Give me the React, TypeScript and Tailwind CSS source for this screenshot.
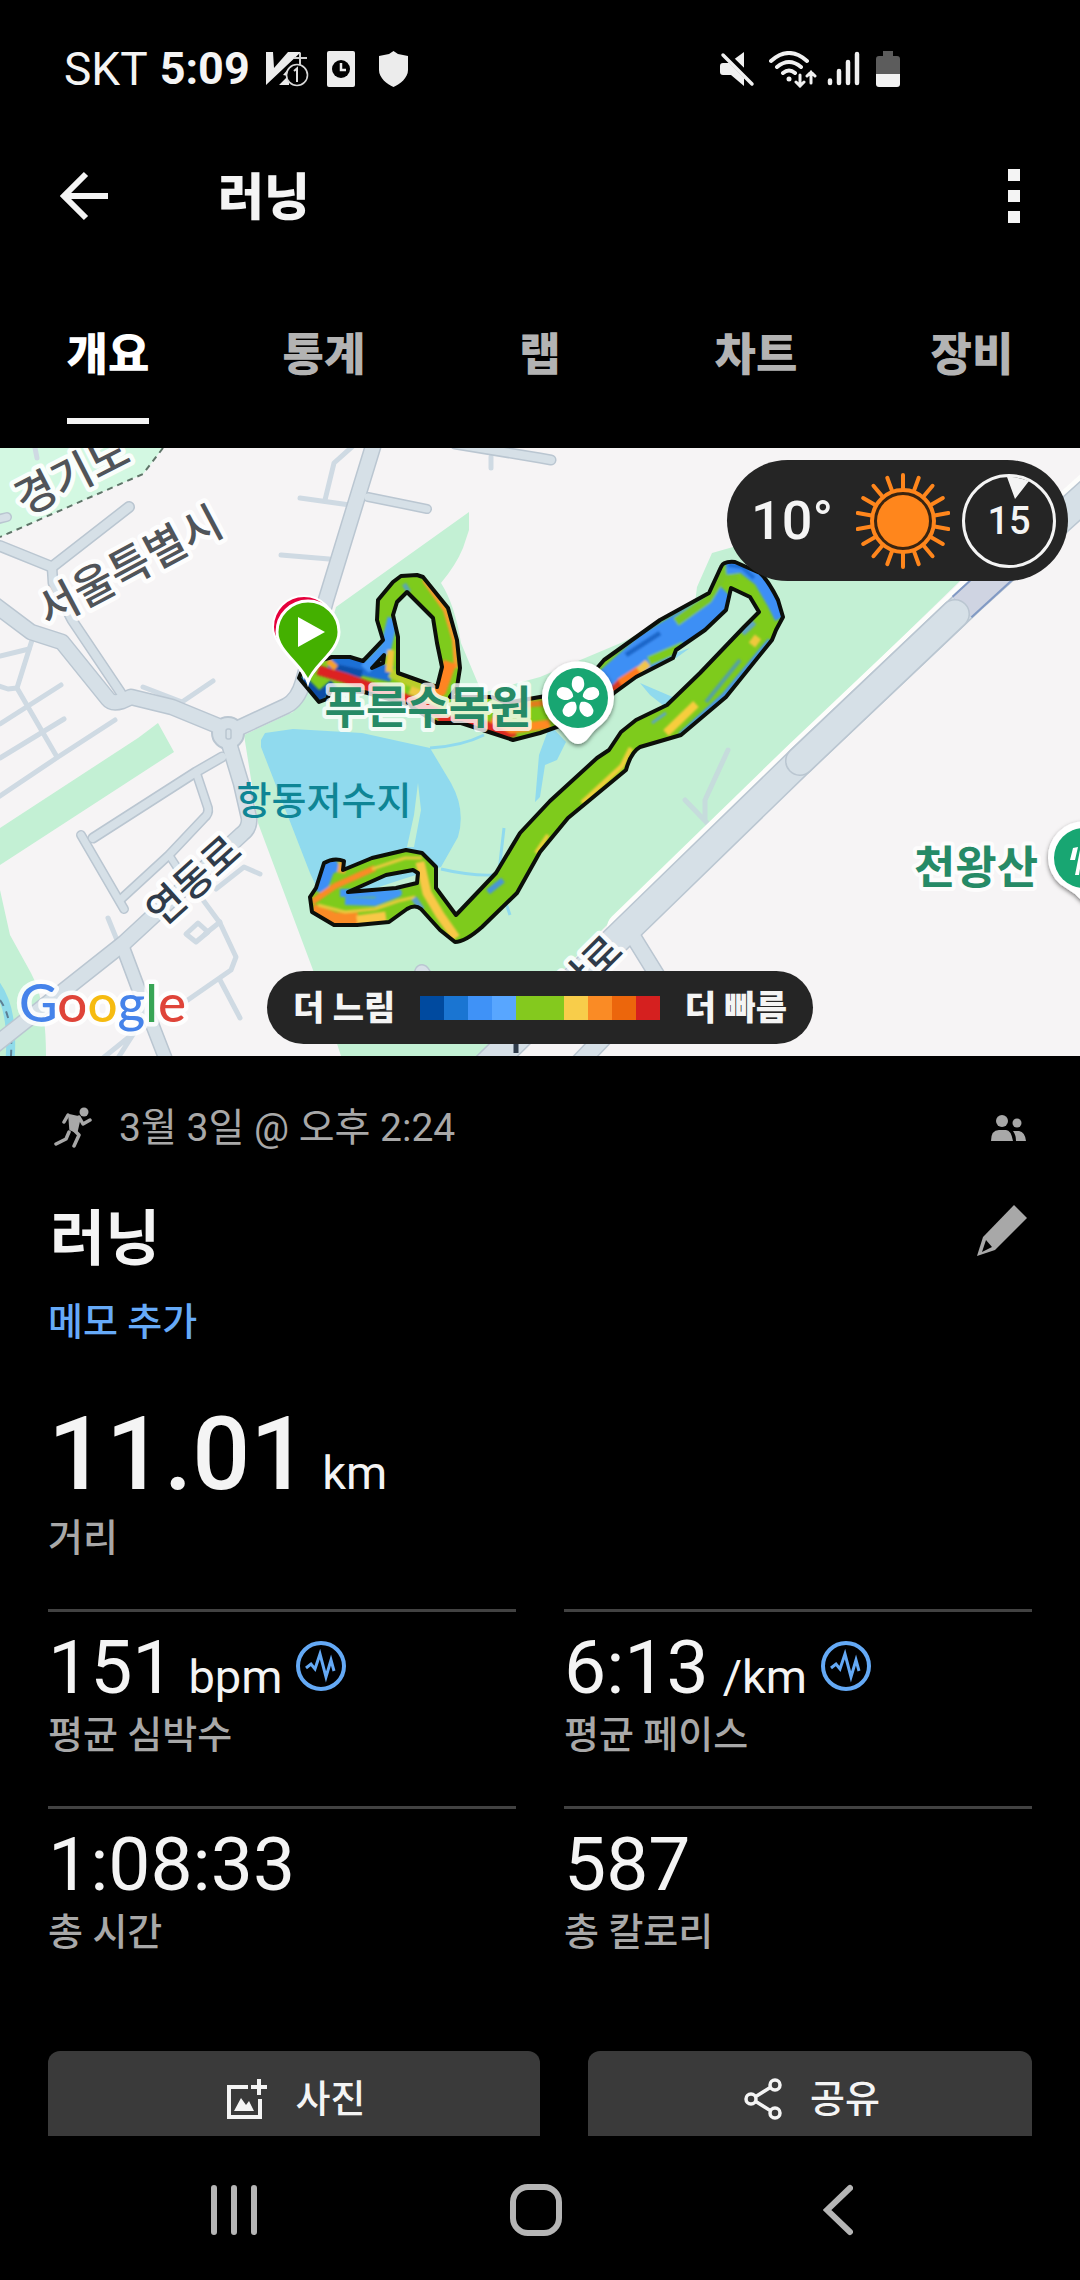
import { useState } from "react";

const TABS = ["개요", "통계", "랩", "차트", "장비"];

const PACE_COLORS = [
  "bg-[#004a9f]",
  "bg-[#1a75d2]",
  "bg-[#3f92f7]",
  "bg-[#58a6ff]",
  "bg-[#84c91e]",
  "bg-[#84c91e]",
  "bg-[#f8cd4a]",
  "bg-[#fa8b25]",
  "bg-[#ec660c]",
  "bg-[#d5201f]",
];

const STATS = [
  { value: "151", unit: "bpm", label: "평균 심박수", graph: true },
  { value: "6:13", unit: "/km", label: "평균 페이스", graph: true },
  { value: "1:08:33", unit: "", label: "총 시간", graph: false },
  { value: "587", unit: "", label: "총 칼로리", graph: false },
];

// wide streets, drawn with a darker edge
const ROADS = [
  { d: "M0 546 L52 567 L129 507", w: 10 },
  { d: "M-5 520 L7 517", w: 8 },
  { d: "M52 567 L53 583 L72 620 L121 693", w: 9 },
  { d: "M-5 605 L31 632 L62 642 L108 699 Q112 704 122 701 L131 697 L172 707 L228 730", w: 15 },
  { d: "M375 440 L326 600 L303 682 Q298 700 286 706 L228 733", w: 15 },
  { d: "M352 505 L326 590", w: 6 },
  { d: "M368 497 L427 509", w: 8 },
  { d: "M455 444 L540 458 L551 460", w: 9 },
  { d: "M228 740 L241 783 L249 818 Q250 828 242 834 L124 943 L-5 1045", w: 15 },
  { d: "M222 757 L196 772 L93 838", w: 9 },
  { d: "M196 772 L208 808 Q209 814 204 818 L169 855 L120 900", w: 8 },
  { d: "M81 835 L124 909", w: 8 },
  { d: "M169 855 L182 875", w: 7 },
  { d: "M122 945 L140 993 L166 1060", w: 13 },
  { d: "M422 972 L440 1000", w: 14 },
  { d: "M634 938 L660 980", w: 15 },
  { d: "M625 1015 L580 1062", w: 17 },
  { d: "M1100 483 L970 600 L801 760 L623 933 L485 1068", w: 28 },
];

// alleys and foot paths
const PATHS = [
  "M300 498 L350 505",
  "M325 500 L334 463 L353 446",
  "M281 555 L329 559",
  "M491 457 L491 468",
  "M143 687 L182 702 L213 681",
  "M0 656 L29 649",
  "M33 637 L17 688 L57 757",
  "M-4 685 L8 689 L17 688",
  "M0 724 L61 685",
  "M0 758 L64 719",
  "M0 796 L58 757 L115 720",
  "M108 918 L119 945",
  "M216 889 L244 867 L260 874",
  "M203 900 L220 923 L236 957 L231 970 L182 1004",
  "M186 934 L198 923 L208 932 L196 942 Z",
  "M205 934 L220 922",
  "M220 980 L240 1018",
  "M103 1058 L134 1033 L118 1058",
  "M35 448 L37 458",
];

const TRACK_OUTER =
  "M299 678 L301 673 L315 662 L332 657 L350 657 L363 661 L383 640 L377 620 L378 600 L393 582 L401 576 L417 575 L423 577 L448 608 L457 640 L460 668 L457 687 L450 697 L492 697 L506 703 L540 697 L580 690 L598 667 L604 660 L660 620 L709 593 L721 567 Q723 561 735 562 L760 573 Q768 580 778 600 L783 617 L776 630 L772 640 L726 697 L681 735 L640 747 Q631 752 626 770 L568 818 L540 852 L517 893 L482 927 Q465 942 455 942 L440 930 L421 909 Q415 904 407 909 L389 922 L357 925 L334 925 L312 912 L310 897 L316 888 L324 863 Q334 857 344 861 L343 870 L372 858 L406 850 L422 853 L436 867 L436 888 L456 915 L496 873 L520 833 L550 801 L597 758 L609 750 L621 732 L636 720 L667 705 L700 673 L744 627 L759 612 L750 597 L731 588 L726 610 L705 630 L676 650 L673 658 L636 677 L614 693 L590 715 L540 733 L513 740 L492 733 L461 723 L437 723 L407 704 L364 692 L331 690 L327 699 L319 702 Z";

const TRACK_HOLES =
  "M407 592 L433 618 L437 643 L442 667 L437 687 L398 673 L398 637 L393 615 L397 602 Z M348 892 L386 875 L413 870 L418 873 L417 883 L396 888 Z M372 668 L384 655 L383 663 Z";

// pace colours along the track: [path, colour, width]
const PACE: [string, string, number][] = [
  ["M328 664 L350 665 L392 674", "#1f6fd6", 16],
  ["M335 668 L362 674", "#0f4fa8", 8],
  ["M365 669 L386 647 L393 618", "#4297f5", 11],
  ["M300 678 L319 697 L334 684", "#0b4ea6", 10],
  ["M318 670 L345 678 L378 690 L412 701 L440 714", "#dd2421", 10],
  ["M328 661 L336 668", "#f8a028", 6],
  ["M390 673 L410 682 L432 692", "#b9ce2c", 9],
  ["M391 650 L389 672", "#f1c43c", 7],
  ["M404 584 L409 592", "#5ba7b0", 5],
  ["M424 580 L445 610 L454 640 L456 668", "#ff9a2e", 4],
  ["M450 662 L440 690 L425 692", "#ff8420", 13],
  ["M410 690 L436 700", "#eec93f", 8],
  ["M438 722 L470 722 L505 733 L515 730", "#dd2b20", 12],
  ["M492 718 L512 729 L550 724", "#ff8a20", 9],
  ["M506 706 L545 703", "#e07b1c", 6],
  ["M585 708 L612 684 L650 650 L705 617 L728 594", "#3c8ff5", 36],
  ["M626 655 L660 633", "#1a66c9", 5],
  ["M676 622 L708 599 L724 573 L738 577", "#79c627", 9],
  ["M610 694 L622 682", "#d93a1c", 9],
  ["M620 683 L640 670", "#ff7a1c", 9],
  ["M639 671 L648 663", "#f3c44a", 8],
  ["M649 661 L684 646", "#7ecb1c", 9],
  ["M650 678 L674 660", "#4a9af2", 6],
  ["M726 568 L742 566 L760 580 L774 604 L781 618", "#3c8ff5", 13],
  ["M728 565 L742 567 L754 578", "#1f6fd6", 4],
  ["M742 633 L754 622", "#5fa6c0", 7],
  ["M752 645 L758 637", "#efc93c", 8],
  ["M770 640 L724 695 L680 735", "#4a96e6", 5],
  ["M740 660 L706 702", "#56a2a2", 4],
  ["M666 733 L696 704", "#f7cd3e", 8],
  ["M631 748 L622 766 L582 803", "#efd03a", 5],
  ["M548 835 L536 853", "#efd03a", 4],
  ["M652 723 L666 713", "#5fa6c0", 3],
  ["M488 892 L503 880", "#4a96d6", 6],
  ["M319 892 L328 868 L338 864", "#3c8ff5", 14],
  ["M343 862 L341 873", "#f5a638", 8],
  ["M312 902 L335 886 L375 868", "#fa8b25", 6],
  ["M372 869 L405 858 L422 858", "#e8ca3c", 3],
  ["M420 862 L427 893 L440 915 L456 938", "#f9c846", 9],
  ["M312 910 L335 919 L358 919", "#fa8b25", 13],
  ["M357 921 L386 917", "#f9c846", 11],
  ["M318 905 L345 912 L375 909 L398 901 L415 897", "#e8ca3c", 3],
  ["M340 893 L398 893 L375 902 L345 901", "#4297f5", 8],
  ["M414 898 L422 910", "#5b9fd0", 6],
];

const START_PIN = "M308 682 C303 665 277 652 277 632 A31 31 0 0 1 339 632 C339 652 313 665 308 682 Z";

const SunIcon = () => (
  <svg width="94" height="98" viewBox="-47 -49 94 98" fill="none" stroke="#ff861c">
    {Array.from({ length: 18 }, (_, i) => (
      <path key={i} d="M0 -32 V-46" strokeWidth="4" strokeLinecap="round" transform={`rotate(${i * 20})`} />
    ))}
    <circle r="31" strokeWidth="4" fill="#3a2410" />
    <circle r="26" fill="#ff861c" stroke="none" />
  </svg>
);

const GraphIcon = () => (
  <svg className="self-start mt-[11px]" width="50" height="50" viewBox="0 0 50 50" fill="none" stroke="#64a9f5">
    <circle cx="25" cy="25" r="23" strokeWidth="4" />
    <path d="M10 27 L15 23 L19 28 L24 13 L30 36 L35 19 L38 30" strokeWidth="3" />
  </svg>
);

const StatusBar = () => (
  <div className="flex items-center justify-between h-[94px] pt-11 pl-16 pr-45">
    <div className="flex items-center">
      <span className="text-[46px] leading-[50px]">SKT</span>
      <span className="ml-3 text-[45px] leading-[50px] font-bold">5:09</span>
      <svg className="ml-4" width="43" height="37" viewBox="0 0 43 37" fill="#ececec">
        <path d="M0 1 H7 L8 17 L22 1 H35 L0 34 Z" />
        <path d="M13 34 L22 25 L17 24 L23 17 V34 Z" />
        <path d="M34 2 V14 M28 7 H41" stroke="#d0d0d0" strokeWidth="2" />
        <circle cx="31" cy="24" r="10.5" fill="#000" stroke="#d8d8d8" strokeWidth="1.6" />
        <path d="M28 20 L31 17.500 V31" fill="none" stroke="#e0e0e0" strokeWidth="2" />
      </svg>
      <svg className="ml-[18px]" width="28" height="36" viewBox="0 0 28 36">
        <rect width="28" height="36" rx="2" fill="#ececec" />
        <circle cx="14" cy="18" r="9" fill="#000" />
        <path d="M14 12 V19 H19" fill="none" stroke="#ececec" strokeWidth="2.500" />
      </svg>
      <svg className="ml-6" width="29" height="36" viewBox="0 0 29 36" fill="#ececec">
        <path d="M14.500 0 L19 3 L29 5 V19 C29 27 21 33 14.500 36 C8 33 0 27 0 19 V5 L10 3 Z" />
      </svg>
    </div>
    <div className="flex items-center">
      <svg width="35" height="36" viewBox="0 0 35 36" fill="#f0f0f0">
        <path d="M24 1 V17 L14.500 8 Z" />
        <path d="M3 12 H9 L24 27 V35 L11 24 H3 Q0 24 0 21 V15 Q0 12 3 12 Z" />
        <path d="M6 1 L34 29" stroke="#000" strokeWidth="3" />
        <path d="M3 4 L32 33" stroke="#f0f0f0" strokeWidth="3.500" strokeLinecap="round" />
      </svg>
      <svg className="ml-[14px]" width="48" height="37" viewBox="0 0 48 37" fill="none" stroke="#f0f0f0" strokeWidth="4" strokeLinecap="round">
        <path d="M2 10 Q20 -6 38 10 M8 16 Q20 6 32 16 M14 22 Q20 17 26 22" />
        <circle cx="20" cy="28" r="2.500" fill="#f0f0f0" stroke="none" />
        <path d="M31 24 V35 M27 31 L31 35 L35 31 M42 32 V21 M38 25 L42 21 L46 25" strokeWidth="3" />
      </svg>
      <svg className="ml-[10px]" width="33" height="36" viewBox="0 0 33 36" stroke="#f0f0f0" strokeWidth="4.500" strokeLinecap="round">
        <path d="M3 29.500 V32 M12 20 V32 M21 11 V32 M30 3 V32" />
      </svg>
      <svg className="ml-4" width="24" height="36" viewBox="0 0 24 36">
        <path d="M7 0 H17 V5 H21 Q24 5 24 8 V23 H0 V8 Q0 5 3 5 H7 Z" fill="#5c5c5c" />
        <path d="M0 23 H24 V33 Q24 36 21 36 H3 Q0 36 0 33 Z" fill="#f2f2f2" />
      </svg>
    </div>
  </div>
);

const RouteMap = () => (
  <svg className="block w-full h-auto" viewBox="0 448 1080 608" role="img" aria-label="지도">
    <defs>
      <clipPath id="track">
        <path clipRule="evenodd" d={TRACK_OUTER + TRACK_HOLES} />
      </clipPath>
      <filter id="soft">
        <feGaussianBlur stdDeviation="1" />
      </filter>
      <filter id="shadow" x="-30%" y="-30%" width="160%" height="160%">
        <feDropShadow dx="0" dy="2" stdDeviation="2" floodOpacity="0.5" />
      </filter>
    </defs>
    <rect y="448" width="1080" height="608" fill="#f6f4f5" />

    {/* parks */}
    <path d="M0 448 H163 L143 474 L0 537 Z" fill="#d3f8e2" />
    <path d="M163 448 L143 474 L0 537" fill="none" stroke="#5f7468" strokeWidth="2" strokeDasharray="6 5" />
    <path
      d="M469 512 L336 607 L318 670 L293 712 L244 735 L258 823 L313 970 L341 1056 H480 L604 928 L781 755 L961 580 V545 H760 L733 547 L712 553 L697 587 L695 603 L623 642 L540 677 L482 693 L461 643 Q455 605 441 583 Q456 565 463 548 L469 530 Z"
      fill="#c3f0d4"
    />
    <path d="M0 828 L138 738 L158 723 L174 752 L0 865 Z" fill="#c3f0d4" />
    <path d="M0 890 L10 935 L31 973 Q46 1000 46 1056 H0 Z" fill="#c3f0d4" />

    {/* water */}
    <path
      d="M261 740 L265 733 L293 729 L362 733 L430 748 L451 783 Q466 810 458 837 L441 867 L400 880 L325 905 L310 873 L261 747 Z"
      fill="#90daee"
    />
    <path d="M418 783 L421 810 L414 847 L407 847 L414 815 Z" fill="#c3f0d4" />
    <path d="M430 748 Q462 746 484 735 M441 869 Q470 876 494 875 M504 828 L498 880 L510 915" fill="none" stroke="#90daee" strokeWidth="3" />
    <path d="M550 725 L566 742 L557 760 L545 765 L540 797 L535 802 L539 755 Z" fill="#90daee" />
    <path d="M640 683 L675 698 L664 706 L650 695 Z M660 658 L690 648 L676 658 Z" fill="#90daee" />
    <path d="M-4 985 Q14 1010 10 1060" fill="none" stroke="#8fdbea" strokeWidth="9" />
    <path d="M0 1000 Q13 1018 11 1056" fill="none" stroke="#5d7f92" strokeWidth="2" strokeDasharray="7 6" />

    {/* streets */}
    <g fill="none" strokeLinejoin="round" strokeLinecap="round">
      {PATHS.map((d) => (
        <path key={d} d={d} stroke="#cfdae3" strokeWidth="5" />
      ))}
      <path d="M728 750 L705 800 L705 820 M685 800 L712 828" stroke="#c6dcdc" strokeWidth="5" />
      <path d="M1100 478 L970 595 L801 755 L623 928" stroke="#fdfdfb" strokeWidth="32" />
      {ROADS.map((r) => (
        <path key={r.d} d={r.d} stroke="#bac6d1" strokeWidth={r.w + 2} />
      ))}
      <circle cx="228" cy="733" r="16" fill="#d6e0e7" stroke="#bac6d1" strokeWidth="2" />
      {ROADS.map((r) => (
        <path key={r.d} d={r.d} stroke="#d6e0e7" strokeWidth={r.w - 1} />
      ))}
      <rect x="226" y="729" width="5" height="10" rx="2" stroke="#bac6d1" strokeWidth="1.500" />
      <path d="M1010 563 L962 607" stroke="#8199c4" strokeWidth="30" strokeLinecap="butt" />
      <path d="M1010 563 L962 607" stroke="#cfd4e2" strokeWidth="26" strokeLinecap="butt" />
      <path d="M955 614 L800 761" stroke="#bac6d1" strokeWidth="30" />
      <path d="M955 614 L800 761" stroke="#d6e0e7" strokeWidth="27" />
    </g>
    <path d="M516 1044 V1053" stroke="#2f3b4a" strokeWidth="5" />

    {/* place names under the track */}
    <g
      fontFamily='Roboto, "Noto Sans CJK KR", sans-serif'
      fontWeight="500"
      textAnchor="middle"
      stroke="#fff"
      strokeOpacity="0.9"
      strokeLinejoin="round"
      paintOrder="stroke"
    >
      <text fontSize="44" fill="#505459" strokeWidth="9" transform="translate(79 489) rotate(-27)">경기도</text>
      <text fontSize="44" fill="#505459" strokeWidth="9" transform="translate(137 580) rotate(-28)">서울특별시</text>
      <text fontSize="40" fill="#2f3b4a" strokeWidth="9" transform="translate(203 891) rotate(-42)">연동로</text>
      <text fontSize="40" fill="#2f3b4a" strokeWidth="9" transform="translate(599 979) rotate(-45)">산로</text>
      <text fontSize="38" x="324" y="814" fill="#0e8595" stroke="none">항동저수지</text>
    </g>

    {/* track */}
    <path d={TRACK_OUTER + TRACK_HOLES} fillRule="evenodd" fill="#7ecb1c" />
    <g clipPath="url(#track)">
      <g filter="url(#soft)" fill="none" strokeLinejoin="round">
        {PACE.map(([d, color, w]) => (
          <path key={d} d={d} stroke={color} strokeWidth={w} />
        ))}
      </g>
    </g>
    <path d={TRACK_OUTER + TRACK_HOLES} fill="none" stroke="#0c0f0a" strokeWidth="4" strokeLinejoin="round" />

    <g
      fontFamily='Roboto, "Noto Sans CJK KR", sans-serif'
      fontWeight="700"
      fontSize="45"
      textAnchor="middle"
      fill="#268a66"
      stroke="#fff"
      strokeOpacity="0.8"
      strokeWidth="8"
      strokeLinejoin="round"
      paintOrder="stroke"
    >
      <text x="428" y="724">푸른수목원</text>
      <text x="976" y="884">천왕산</text>
    </g>

    {/* finish and start pins */}
    <path d={START_PIN} transform="translate(-4 -5)" fill="#e5003c" stroke="#fff" strokeWidth="2" />
    <path d={START_PIN} fill="#44b000" stroke="#fff" strokeWidth="3" />
    <path d="M298 617 V647 L325 632 Z" fill="#fff" />

    {/* botanical garden */}
    <g filter="url(#shadow)">
      <path d="M578 744 Q572 744 566 736 Q562 730 554 724 A36 36 0 1 1 602 724 Q594 730 590 736 Q584 744 578 744 Z" fill="#fff" />
      <path d="M1090 904 Q1084 904 1075 894 L1060 884 A36 36 0 1 1 1108 884 Z" fill="#fff" />
    </g>
    <circle cx="578" cy="698" r="30" fill="#18a672" />
    <g transform="translate(578 698)" fill="#fff">
      {[0, 72, 144, 216, 288].map((a) => (
        <path key={a} d="M0 -5 C-5 -7 -7 -12 -6 -16 A6 6 0 0 1 6 -16 C7 -12 5 -7 0 -5 Z" transform={`rotate(${a})`} />
      ))}
    </g>
    <circle cx="1084" cy="858" r="30" fill="#18a672" />
    <path d="M1073 848 L1078 847 L1075 860 H1070 Z M1080 850 H1083 L1079 875 H1075 Z" fill="#fff" />

    {/* map provider */}
    <text
      x="19"
      y="1022"
      fontFamily="Lato, sans-serif"
      fontSize="53"
      stroke="#fff"
      strokeOpacity="0.85"
      strokeWidth="9"
      strokeLinejoin="round"
      paintOrder="stroke"
      fontWeight="500"
    >
      <tspan fill="#4583ea">G</tspan>
      <tspan fill="#df4439">o</tspan>
      <tspan fill="#f6bb10">o</tspan>
      <tspan fill="#4583ea">g</tspan>
      <tspan fill="#38a555">l</tspan>
      <tspan fill="#df4439">e</tspan>
    </text>
  </svg>
);

const App = () => {
  const [activeTab, setActiveTab] = useState(0);

  return (
    <div className="flex flex-col min-h-screen bg-black text-[#f4f4f4] font-[Roboto,'Noto_Sans_CJK_KR',sans-serif]">
      <StatusBar />

      <header className="flex items-center h-[204px] pl-[60px] pr-[60px]">
        <button aria-label="뒤로">
          <svg width="48" height="50" viewBox="0 0 48 50" fill="none" stroke="#f4f4f4" strokeWidth="6">
            <path d="M26 3 L4 25 L26 47 M4 25 H48" />
          </svg>
        </button>
        <h1 className="ml-[110px] pt-1 text-[50px] leading-[60px] font-black">러닝</h1>
        <button aria-label="메뉴" className="ml-auto flex flex-col gap-[9px]">
          <span className="size-3 bg-[#f4f4f4]" />
          <span className="size-3 bg-[#f4f4f4]" />
          <span className="size-3 bg-[#f4f4f4]" />
        </button>
      </header>

      <nav className="grid grid-cols-5 pt-[30px] pb-6">
        {TABS.map((tab, index) => (
          <button
            key={tab}
            onClick={() => setActiveTab(index)}
            className={`flex flex-col items-center text-[45px] leading-[56px] font-black ${
              activeTab === index ? "text-white" : "text-[#b3b3b3]"
            }`}
          >
            <span>
              {tab}
              <span className={`block mt-[34px] h-[6px] ${activeTab === index ? "bg-[#f4f4f4]" : ""}`} />
            </span>
          </button>
        ))}
      </nav>

      <section className="relative">
        <RouteMap />
        {/* weather */}
        <div className="absolute top-3 right-3 flex items-center h-[121px] w-[341px] pl-6 pr-3 rounded-full bg-[#252525]">
          <span className="text-[54px] leading-[64px] font-medium">10°</span>
          <div className="ml-auto flex items-center gap-3">
            <SunIcon />
            <div className="relative flex items-center justify-center size-[94px] rounded-full border-[3px] border-[#f4f4f4]">
              <svg className="absolute top-0 left-[38px]" width="26" height="22" viewBox="0 0 26 22">
                <path d="M1 0 Q13 -1 26 4 L12 22 L4 0 Z" fill="#f4f4f4" />
              </svg>
              <span className="text-[38px] leading-[44px] font-medium">15</span>
            </div>
          </div>
        </div>
        {/* pace legend */}
        <div className="absolute bottom-3 left-1/2 -translate-x-1/2 flex items-center justify-between w-[546px] h-[73px] px-[26px] rounded-full bg-[#252525] text-[34px] leading-[44px] font-black whitespace-nowrap">
          <span>더 느림</span>
          <div className="flex">
            {PACE_COLORS.map((color, index) => (
              <span key={index} className={`size-6 ${color}`} />
            ))}
          </div>
          <span>더 빠름</span>
        </div>
      </section>

      <main className="flex-1 px-12 pt-12">
        <div className="flex items-center h-12 text-[#a8a8a8]">
          <svg className="ml-[6px]" width="39" height="42" viewBox="0 0 39 42" fill="none" stroke="currentColor" strokeWidth="3.500" strokeLinecap="round" strokeLinejoin="round">
            <circle cx="30" cy="5" r="4.500" fill="currentColor" stroke="none" />
            <path d="M16 9 L25 11 L22 24 L17 22 Z" fill="currentColor" />
            <path d="M10 15 L14 8 M25 10 L29 17 L36 13 M20 23 L25 28 L20 39 M15 25 L12 32 L2 37" />
          </svg>
          <span className="ml-[26px] text-[39px] leading-[48px]">3월 3일 @ 오후 2:24</span>
          <svg className="ml-auto mr-[6px]" width="35" height="26" viewBox="0 0 35 26" fill="currentColor">
            <circle cx="11" cy="6" r="6" />
            <circle cx="26" cy="8" r="4.500" />
            <path d="M0 26 Q0 15 8 15 H15 Q20 15 22 26 Z M22 16 H28 Q34 17 35 26 H25 Q25 20 22 16 Z" />
          </svg>
        </div>

        <div className="flex items-start justify-between mt-[53px]">
          <h2 className="pt-[3px] pl-[2px] text-[60px] leading-[64px] font-bold">러닝</h2>
          <button aria-label="편집" className="mr-1">
            <svg width="51" height="51" viewBox="0 0 51 51" fill="#a8a8a8">
              <path d="M37 0 L50 13 L18 45 L0 51 L6 32 Z" />
              <path d="M9 35 L15 42 L5 47 Z" fill="#000" />
            </svg>
          </button>
        </div>
        <button className="block mt-[26px] text-[38px] leading-[48px] font-medium text-[#66aaf8]">메모 추가</button>

        <div className="mt-14">
          <div className="flex items-baseline gap-[14px] leading-[104px]">
            <span className="text-[102px] font-medium">11.01</span>
            <span className="text-[47px] leading-none">km</span>
          </div>
          <div className="mt-2 text-[38px] leading-[48px] font-medium text-[#a8a8a8]">거리</div>
        </div>

        <div className="grid grid-cols-2 gap-x-12 gap-y-[47px] mt-[47px]">
          {STATS.map((stat) => (
            <div key={stat.label} className="border-t-[3px] border-[#424242] pt-[18px]">
              <div className="flex items-baseline gap-[14px] leading-[75px]">
                <span className="text-[75px]">{stat.value}</span>
                {stat.unit && <span className="text-[47px] leading-none">{stat.unit}</span>}
                {stat.graph && <GraphIcon />}
              </div>
              <div className="mt-[6px] text-[38px] leading-[48px] font-medium text-[#a8a8a8]">{stat.label}</div>
            </div>
          ))}
        </div>

        <div className="grid grid-cols-[41fr_37fr] gap-12 mt-[95px] text-[38px] leading-[48px] font-medium">
          <button className="flex items-center justify-center gap-7 pt-6 pb-[13px] pl-1 rounded-t-xl bg-[#3a3a3a]">
            <svg width="41" height="41" viewBox="0 0 41 41" fill="none" stroke="#f4f4f4" strokeWidth="4">
              <path d="M21 8 H2 V38 H33 V20 M32 0 V16 M24 8 H40" />
              <path d="M7 32 L14 19 L19 26 L22 22 L27 32 Z" fill="#f4f4f4" stroke="none" />
            </svg>
            사진
          </button>
          <button className="flex items-center justify-center gap-7 pt-6 pb-[13px] pl-1 rounded-t-xl bg-[#3a3a3a]">
            <svg width="38" height="42" viewBox="0 0 38 42" fill="none" stroke="#f4f4f4" strokeWidth="3.500">
              <circle cx="31" cy="7" r="5" />
              <circle cx="7" cy="21" r="5" />
              <circle cx="31" cy="35" r="5" />
              <path d="M11 19 L27 9 M11 23 L27 33" />
            </svg>
            공유
          </button>
        </div>
      </main>

      <nav className="grid grid-cols-3 h-36 pl-[83px] pr-[91px]">
        <button aria-label="최근 앱" className="flex items-center justify-center pt-1">
          <svg width="48" height="52" viewBox="0 0 48 52" stroke="#b5b5b5" strokeWidth="6" strokeLinecap="round">
            <path d="M4 4 V48 M24 4 V48 M44 4 V48" />
          </svg>
        </button>
        <button aria-label="홈" className="flex items-center justify-center pt-1">
          <svg width="54" height="54" viewBox="0 0 54 54" fill="none" stroke="#b5b5b5" strokeWidth="6">
            <rect x="4" y="4" width="46" height="46" rx="15" />
          </svg>
        </button>
        <button aria-label="이전" className="flex items-center justify-center pt-1">
          <svg width="30" height="52" viewBox="0 0 30 52" fill="none" stroke="#b5b5b5" strokeWidth="6" strokeLinecap="round">
            <path d="M27 4 L4 26 L27 48" />
          </svg>
        </button>
      </nav>
    </div>
  );
};

export default App;
